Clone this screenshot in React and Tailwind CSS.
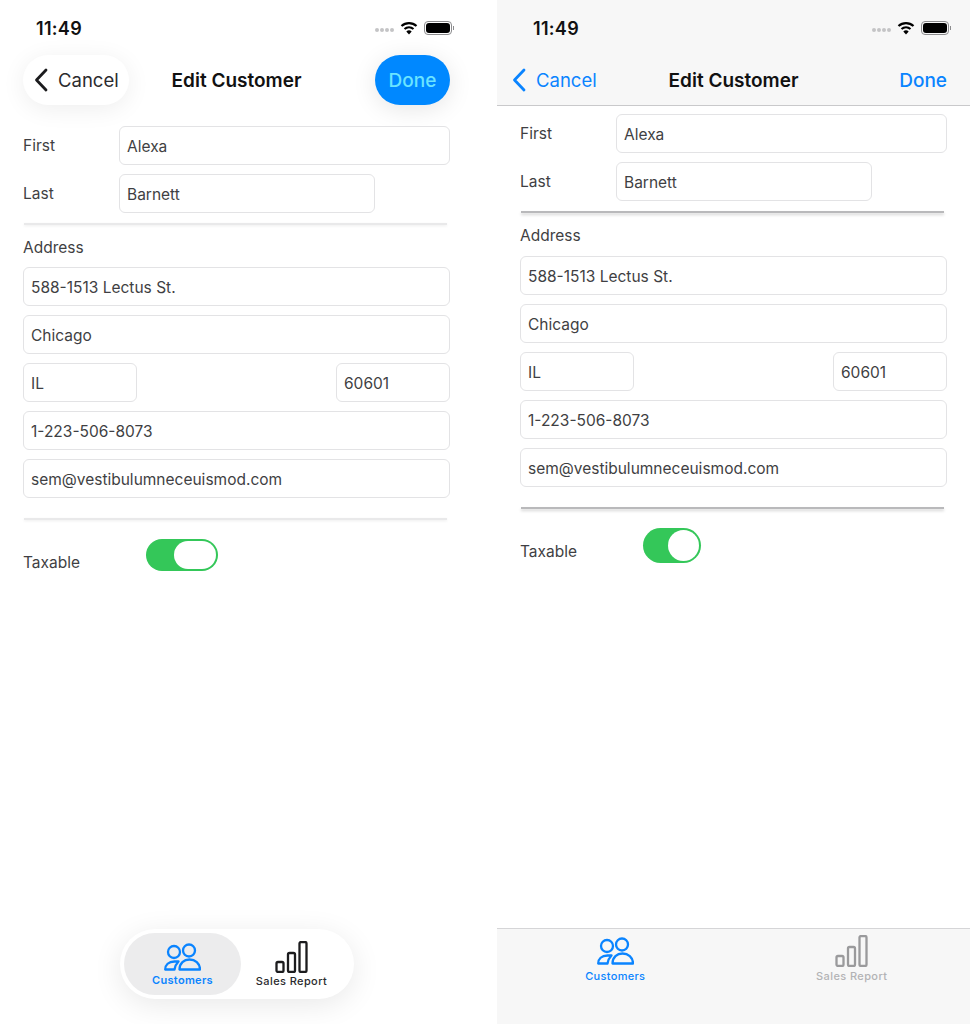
import React from 'react';

const FONT = 'font-["Inter","Liberation_Sans",sans-serif]';

function Field({ value, className = '' }) {
  return (
    <div className={`h-[39px] flex items-center pl-[7px] pt-[2px] bg-white border border-[#e3e3e5] rounded-[6px] text-[15.5px] text-[#3f3f43] ${className}`}>
      {value}
    </div>
  );
}

function Divider({ strong }) {
  return (
    <div className={strong
      ? 'h-[2px] ml-px mr-[3px] bg-[#b9b9bb] shadow-[0_2px_3px_rgba(0,0,0,0.18)]'
      : 'h-[2px] ml-px mr-[3px] bg-[#e9e9ea] shadow-[0_1px_3px_rgba(0,0,0,0.08)]'} />
  );
}

function StatusBar({ className = '' }) {
  return (
    <div className={`flex items-center justify-between h-[56px] ${className}`}>
      <span className="text-[18px] font-semibold text-[#111] tracking-[0.3px]">11:49</span>
      <div className="flex items-center">
        <div className="flex gap-[1px] mr-[6px] mt-[4px]">
          <span className="w-[4px] h-[4px] rounded-full bg-[#c4c4c6]" />
          <span className="w-[4px] h-[4px] rounded-full bg-[#c4c4c6]" />
          <span className="w-[4px] h-[4px] rounded-full bg-[#c4c4c6]" />
          <span className="w-[4px] h-[4px] rounded-full bg-[#c4c4c6]" />
        </div>
        <svg width="18" height="14" viewBox="0 0 18 14" className="mr-[6px]">
          <path d="M1.5 5 A11 11 0 0 1 16.5 5" fill="none" stroke="#000" strokeWidth="2.2" />
          <path d="M4.5 8 A7 7 0 0 1 13.5 8" fill="none" stroke="#000" strokeWidth="2.2" />
          <path d="M9 13.5 L6.3 10.6 A4 4 0 0 1 11.7 10.6 Z" fill="#000" />
        </svg>
        <div className="w-[28px] h-[14px] rounded-[4px] border border-[#8c8c8e] p-[1px]">
          <div className="w-full h-full rounded-[3px] bg-black" />
        </div>
        <div className="w-[1px] h-[4px] ml-[1px] bg-[#8c8c8e]" />
      </div>
    </div>
  );
}

function Chevron({ color }) {
  return (
    <svg width="14" height="24" viewBox="0 0 14 24" fill="none">
      <path d="M12 2 L2.5 12 L12 22" stroke={color} strokeWidth="2.8" strokeLinecap="round" strokeLinejoin="round" />
    </svg>
  );
}

function PeopleIcon() {
  return (
    <svg width="37" height="28" viewBox="0 0 37 28" fill="none" stroke="#0a84ff" strokeWidth="2.3">
      <circle cx="10" cy="9" r="6" />
      <circle cx="25" cy="7.5" r="6" />
      <path d="M15.5 26.5 C15.5 20 20 16.5 25.5 16.5 C31 16.5 36 20 36 26.5 Z" strokeLinejoin="round" />
      <path d="M1.2 26.5 C1.2 22 4.5 18.5 10.5 18.5 L14.5 18.5 C12.5 20.5 11 23 10.5 26.5 Z" strokeLinejoin="round" />
    </svg>
  );
}

function BarsIcon({ color }) {
  return (
    <svg width="34" height="32" viewBox="0 0 34 32" fill="none" stroke={color} strokeWidth="2.3">
      <rect x="1.5" y="21" width="7" height="10" rx="1.5" />
      <rect x="13" y="12" width="7" height="19" rx="1.5" />
      <rect x="24.5" y="1" width="7" height="30" rx="1.5" />
    </svg>
  );
}

function Form({ strong, toggle, gapTop, inputsGap }) {
  return (
    <div className={`flex flex-col ${gapTop}`}>
      <div className="flex items-center text-[15.5px] text-[#3f3f43]">
        <span className="w-[96px]">First</span>
        <Field value="Alexa" className="flex-1" />
      </div>
      <div className="flex items-center mt-[9px] text-[15.5px] text-[#3f3f43]">
        <span className="w-[96px]">Last</span>
        <Field value="Barnett" className="w-[256px]" />
      </div>
      <div className="mt-[10px]"><Divider strong={strong} /></div>
      <div className="mt-[13px] h-[20px] leading-[20px] text-[15.5px] text-[#3f3f43]">Address</div>
      <div className={`${inputsGap} flex flex-col gap-[9px]`}>
        <Field value="588-1513 Lectus St." />
        <Field value="Chicago" />
        <div className="flex justify-between">
          <Field value="IL" className="w-[114px]" />
          <Field value="60601" className="w-[114px]" />
        </div>
        <Field value="1-223-506-8073" />
        <Field value="sem@vestibulumneceuismod.com" />
      </div>
      <div className="mt-[20px]"><Divider strong={strong} /></div>
      {toggle}
    </div>
  );
}

function LeftPhone() {
  return (
    <div className="w-[473px] h-[1024px] flex flex-col bg-white">
      <StatusBar className="pl-[36px] pr-[19px]" />
      <div className="grid grid-cols-[1fr_auto_1fr] items-center h-[50px] mt-[-1px] px-[23px]">
        <div className="justify-self-start w-[106px] h-[50px] flex items-center pl-[11px] rounded-[25px] bg-white shadow-[0_4px_24px_rgba(0,0,0,0.07)]">
          <Chevron color="#1c1c1e" />
          <span className="ml-[10px] pt-[1px] text-[18.5px] text-[#2b2b2e]">Cancel</span>
        </div>
        <span className="pt-[2px] text-[19px] font-semibold text-[#111]">Edit Customer</span>
        <div className="justify-self-end w-[75px] h-[50px] flex items-center justify-center pt-[2px] rounded-[25px] bg-[#0088ff] text-[19px] font-medium text-[#6be4ff] shadow-[0_4px_24px_rgba(0,0,0,0.1)]">
          Done
        </div>
      </div>
      <div className="flex-1 flex flex-col px-[23px]">
        <Form
          gapTop="mt-[21px]"
          inputsGap="mt-[9px]"
          toggle={
            <div className="flex mt-[19px]">
              <span className="w-[123px] mt-[14px] text-[15.5px] leading-[20px] text-[#3f3f43]">Taxable</span>
              <div className="w-[72px] h-[32px] rounded-full bg-[#34c759] p-[2px] flex justify-end">
                <div className="w-[42px] h-full rounded-full bg-white" />
              </div>
            </div>
          }
        />
      </div>
      <div className="flex justify-center pb-[25px] pl-[1px]">
        <div className="w-[234px] h-[70px] p-[4px] flex rounded-[35px] bg-white shadow-[0_6px_30px_rgba(0,0,0,0.09)]">
          <div className="w-[117px] h-[62px] flex flex-col items-center pt-[10px] rounded-[31px] bg-[#ececed]">
            <PeopleIcon />
            <span className="mt-[2px] text-[11px] leading-[14px] font-semibold text-[#0a84ff] tracking-[0.3px]">Customers</span>
          </div>
          <div className="flex-1 flex flex-col items-center pt-[8px] pr-[8px]">
            <BarsIcon color="#1c1c1e" />
            <span className="mt-[1px] text-[11px] leading-[14px] font-medium text-[#2b2b2e] tracking-[0.4px] whitespace-nowrap">Sales Report</span>
          </div>
        </div>
      </div>
    </div>
  );
}

function RightPhone() {
  return (
    <div className="w-[473px] h-[1024px] flex flex-col bg-white">
      <div className="h-[106px] bg-[#f7f7f7] border-b border-[#c9c9cb]">
        <StatusBar className="pl-[36px] pr-[19px]" />
        <div className="grid grid-cols-[1fr_auto_1fr] items-center h-[50px] mt-[-1px] px-[15px]">
          <div className="flex items-center">
            <Chevron color="#0a84ff" />
            <span className="ml-[10px] pt-[1px] text-[18.5px] text-[#0a84ff]">Cancel</span>
          </div>
          <span className="pt-[2px] text-[19px] font-semibold text-[#111]">Edit Customer</span>
          <span className="justify-self-end mr-[8px] pt-[2px] text-[19px] font-medium text-[#0a84ff]">Done</span>
        </div>
      </div>
      <div className="flex-1 flex flex-col px-[23px]">
        <Form
          strong
          gapTop="mt-[8px]"
          inputsGap="mt-[10px]"
          toggle={
            <div className="flex mt-[19px]">
              <span className="w-[123px] mt-[14px] text-[15.5px] leading-[20px] text-[#3f3f43]">Taxable</span>
              <div className="w-[58px] h-[35px] rounded-full bg-[#34c759] p-[2px] flex justify-end">
                <div className="w-[31px] h-full rounded-full bg-white" />
              </div>
            </div>
          }
        />
      </div>
      <div className="h-[96px] grid grid-cols-2 bg-[#f7f7f7] border-t border-[#d5d5d7]">
        <div className="flex flex-col items-center pt-[8px]">
          <PeopleIcon />
          <span className="mt-[4px] text-[11px] leading-[14px] font-medium text-[#0a84ff] tracking-[0.3px]">Customers</span>
        </div>
        <div className="flex flex-col items-center pt-[6px]">
          <BarsIcon color="#9a9a9c" />
          <span className="mt-[2px] text-[11px] leading-[14px] font-medium text-[#b3b3b5] tracking-[0.4px]">Sales Report</span>
        </div>
      </div>
    </div>
  );
}

export default function App() {
  return (
    <div className={`w-[970px] h-[1024px] flex justify-between bg-white overflow-hidden ${FONT}`}>
      <LeftPhone />
      <RightPhone />
    </div>
  );
}
